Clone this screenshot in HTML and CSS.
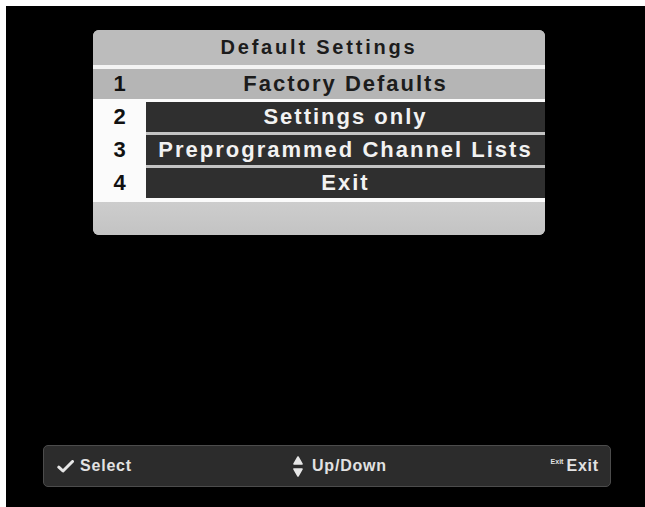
FILE: index.html
```html
<!DOCTYPE html>
<html lang="en">
<head>
<meta charset="utf-8">
<title>Default Settings</title>
<link rel="stylesheet" href="styles.css">
</head>
<body>
<div class="screen">
  <div class="panel">
    <div class="panel-title">Default Settings</div>
    <div class="list">
      <div class="row row-selected">
        <div class="num">1</div>
        <div class="label">Factory Defaults</div>
      </div>
      <div class="row row-first">
        <div class="num">2</div>
        <div class="label">Settings only</div>
      </div>
      <div class="row">
        <div class="num">3</div>
        <div class="label">Preprogrammed Channel Lists</div>
      </div>
      <div class="row">
        <div class="num">4</div>
        <div class="label">Exit</div>
      </div>
    </div>
    <div class="panel-foot"></div>
  </div>

  <div class="helpbar">
    <div class="help help-select">
      <svg class="icon-check" width="17" height="13" viewBox="0 0 17 13">
        <path d="M1.8 7.2 L6 11 L15.5 1.5" fill="none" stroke="#e6e6e6" stroke-width="3" stroke-linecap="round" stroke-linejoin="round"/>
      </svg>
      <span>Select</span>
    </div>
    <div class="help help-nav">
      <svg class="icon-updown" width="10" height="21" viewBox="0 0 10 21">
        <path d="M5 1 L9 8 L1 8 Z" fill="#e6e6e6" stroke="#e6e6e6" stroke-width="1.6" stroke-linejoin="round"/>
        <path d="M1 13 L9 13 L5 20 Z" fill="#e6e6e6" stroke="#e6e6e6" stroke-width="1.6" stroke-linejoin="round"/>
      </svg>
      <span>Up/Down</span>
    </div>
    <div class="help help-exit">
      <span class="key-label">Exit</span>
      <span>Exit</span>
    </div>
  </div>
</div>
</body>
</html>
```

FILE: styles.css
```css
html, body {
  margin: 0;
  padding: 0;
  background: #ffffff;
}

body {
  width: 645px;
  height: 507px;
  overflow: hidden;
  font-family: "Liberation Sans", Arial, sans-serif;
}

.screen {
  margin: 6px 0 0 6px;
  width: 639px;
  height: 501px;
  background: #000000;
  display: flex;
  flex-direction: column;
  align-items: flex-start;
  padding-top: 24px;
  box-sizing: border-box;
}

.panel {
  margin-left: 87px;
  width: 452px;
  border-radius: 6px;
  overflow: hidden;
  display: flex;
  flex-direction: column;
  background: #c6c6c6;
}

.panel-title {
  height: 35px;
  line-height: 35px;
  text-align: center;
  background: #bcbcbc;
  color: #1c1c1c;
  font-weight: bold;
  font-size: 20px;
  letter-spacing: 2.8px;
  border-bottom: 4px solid #f4f4f4;
}

.list {
  background: #fbfbfb;
  display: flex;
  flex-direction: column;
  padding-bottom: 4px;
}

.row {
  display: flex;
  height: 33px;
}

.num {
  width: 53px;
  flex: none;
  display: flex;
  align-items: center;
  justify-content: center;
  font-weight: bold;
  font-size: 22px;
  color: #111111;
  padding-top: 3px;
  box-sizing: border-box;
}

.label {
  flex: 1;
  display: flex;
  align-items: center;
  justify-content: center;
  background: #2f2f2f;
  color: #f2f2f2;
  font-weight: bold;
  font-size: 22px;
  letter-spacing: 2px;
  border-top: 3px solid #c4c4c4;
  box-sizing: border-box;
  white-space: nowrap;
}

.row-first .label {
  border-top-color: #fbfbfb;
}

.row-selected {
  height: 30px;
  background: #b5b5b5;
}

.row-selected .num {
  padding-top: 0;
}

.row-selected .label {
  background: transparent;
  color: #1c1c1c;
  border-top: 0;
}

.panel-foot {
  height: 33px;
  background: linear-gradient(#cdcdcd, #c3c3c3);
}

.helpbar {
  margin-top: 210px;
  margin-left: 37px;
  width: 568px;
  height: 42px;
  box-sizing: border-box;
  border: 1px solid #4c4c4c;
  border-radius: 5px;
  background: #2c2c2c;
  display: flex;
  align-items: center;
  padding: 0 11px 0 13px;
  color: #e2e2e2;
  font-weight: bold;
  font-size: 16px;
  letter-spacing: 0.8px;
}

.help {
  display: flex;
  align-items: center;
}

.icon-check {
  margin-right: 6px;
}

.help-nav {
  margin-left: 161px;
}

.icon-updown {
  margin-right: 9px;
}

.help-exit {
  margin-left: auto;
  align-items: flex-start;
}

.key-label {
  font-size: 7px;
  letter-spacing: 0;
  margin-top: 1px;
  margin-right: 3px;
}
```
